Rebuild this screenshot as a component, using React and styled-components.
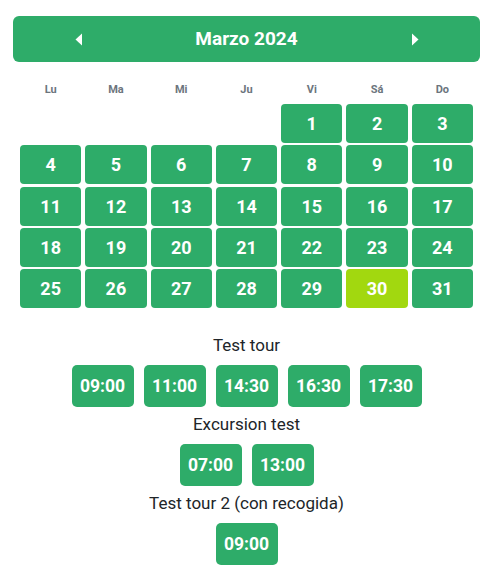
import React, { useState } from 'react';
import styled, { createGlobalStyle } from 'styled-components';

const GlobalStyle = createGlobalStyle`
  body {
    margin: 0;
    background: #fff;
    font-family: Roboto, 'Liberation Sans', sans-serif;
  }
`;

const DAYS = ['Lu', 'Ma', 'Mi', 'Ju', 'Vi', 'Sá', 'Do'];

const TOURS = [
  { name: 'Test tour', times: ['09:00', '11:00', '14:30', '16:30', '17:30'] },
  { name: 'Excursion test', times: ['07:00', '13:00'] },
  { name: 'Test tour 2 (con recogida)', times: ['09:00'] },
];

const Caret = ({ dir }) => (
  <svg width='8' height='13' viewBox='0 0 8 13'>
    {dir === 'left' ? (
      <path d='M7 0.5 L0.5 6.5 L7 12.5 Z' fill='#fff' />
    ) : (
      <path d='M1 0.5 L7.5 6.5 L1 12.5 Z' fill='#fff' />
    )}
  </svg>
);

const App = () => {
  const [selected, setSelected] = useState(30);
  const cells = [];
  for (let i = 0; i < 4; i++) cells.push(null);
  for (let d = 1; d <= 31; d++) cells.push(d);

  return (
    <Wrapper>
      <GlobalStyle />
      <Header>
        <NavButton>
          <Caret dir='left' />
        </NavButton>
        <Title>Marzo 2024</Title>
        <NavButton>
          <Caret dir='right' />
        </NavButton>
      </Header>
      <Grid>
        {DAYS.map((d) => (
          <DayName key={d}>{d}</DayName>
        ))}
      </Grid>
      <Grid $rows>
        {cells.map((d, i) =>
          d ? (
            <DayCell key={i} $active={d === selected} onClick={() => setSelected(d)}>
              {d}
            </DayCell>
          ) : (
            <span key={i} />
          )
        )}
      </Grid>
      <Tours>
        {TOURS.map((tour) => (
          <Tour key={tour.name}>
            <TourName>{tour.name}</TourName>
            <Times>
              {tour.times.map((t) => (
                <TimeButton key={t}>{t}</TimeButton>
              ))}
            </Times>
          </Tour>
        ))}
      </Tours>
    </Wrapper>
  );
};

const Wrapper = styled.div`
  padding: 16px 13px;
`;

const Header = styled.div`
  height: 46px;
  background: #2eac69;
  border-radius: 6px;
  display: grid;
  grid-template-columns: 131px 1fr 131px;
  align-items: center;
`;

const NavButton = styled.div`
  display: flex;
  justify-content: center;
  align-items: center;
  padding-top: 1px;
  cursor: pointer;
`;

const Title = styled.div`
  text-align: center;
  color: #fff;
  font-weight: 700;
  font-size: 19px;
  line-height: 24px;
`;

const Grid = styled.div`
  display: grid;
  grid-template-columns: repeat(7, 1fr);
  column-gap: 4px;
  row-gap: 2.25px;
  padding: 0 7px;
  margin-top: ${(p) => (p.$rows ? '6px' : '20px')};
  grid-auto-rows: ${(p) => (p.$rows ? '39px' : '16px')};
`;

const DayName = styled.div`
  text-align: center;
  color: #6c757d;
  font-size: 11px;
  font-weight: 700;
  line-height: 16px;
`;

const DayCell = styled.div`
  background: ${(p) => (p.$active ? '#a2d80f' : '#2eac69')};
  border-radius: 4px;
  color: #fff;
  font-weight: 700;
  font-size: 18px;
  display: flex;
  align-items: center;
  justify-content: center;
  cursor: pointer;
`;

const Tours = styled.div`
  margin-top: 25px;
  display: flex;
  flex-direction: column;
`;

const Tour = styled.div`
  display: flex;
  flex-direction: column;
  align-items: center;
`;

const TourName = styled.div`
  font-size: 17px;
  line-height: 24px;
  color: #212529;
  margin-bottom: 3px;
`;

const Times = styled.div`
  display: flex;
  justify-content: center;
  flex-wrap: wrap;
`;

const TimeButton = styled.div`
  width: 62px;
  height: 42px;
  margin: 5px;
  background: #2eac69;
  border-radius: 5px;
  color: #fff;
  font-weight: 700;
  font-size: 17.5px;
  display: flex;
  align-items: center;
  justify-content: center;
  cursor: pointer;
`;

export default App;
